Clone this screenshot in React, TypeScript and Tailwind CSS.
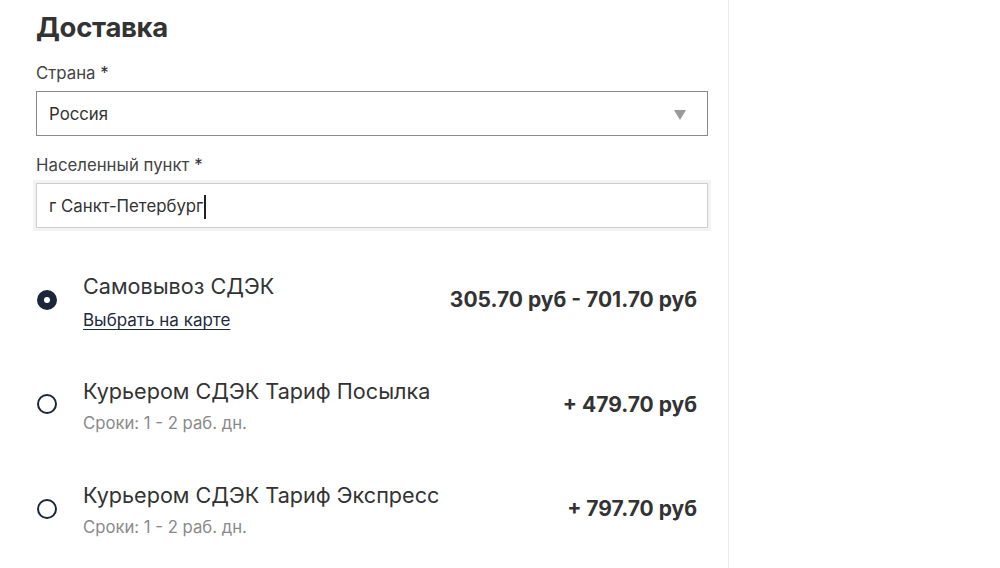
import React, { useState } from "react";

interface Option {
  id: string;
  title: string;
  sub?: string;
  link?: string;
  price: string;
}

const options: Option[] = [
  { id: "pickup", title: "Самовывоз СДЭК", link: "Выбрать на карте", price: "305.70 руб - 701.70 руб" },
  { id: "parcel", title: "Курьером СДЭК Тариф Посылка", sub: "Сроки: 1 - 2 раб. дн.", price: "+ 479.70 руб" },
  { id: "express", title: "Курьером СДЭК Тариф Экспресс", sub: "Сроки: 1 - 2 раб. дн.", price: "+ 797.70 руб" },
];

export default function App() {
  const [selected, setSelected] = useState("pickup");

  return (
    <div className="flex h-[568px] w-[1000px] overflow-hidden bg-white font-['Inter',sans-serif] text-[#333]">
      <div className="w-[729px] shrink-0 border-r border-[#ececec] pl-9 pr-5 shadow-[1px_0_3px_rgba(0,0,0,0.04)]">
        <h2 className="pt-[9px] text-[27.5px] font-bold leading-[36px] tracking-[-0.3px] text-[#333]">Доставка</h2>

        <label className="mt-[18px] block text-[16.8px] leading-5 text-[#444]">
          Страна <span className="text-[#333]">*</span>
        </label>
        <div className="mt-[8px] flex h-[45px] items-center justify-between border border-[#8a8a8a] pl-3 pr-5">
          <span className="pt-[3px] text-[16.8px] text-[#333]">Россия</span>
          <svg width="14" height="12" viewBox="0 0 14 12" className="mt-[2px] text-[#9a9a9a]">
            <path d="M1 1h12L7 11z" fill="currentColor" />
          </svg>
        </div>

        <label className="mt-[19px] block text-[16.8px] leading-5 text-[#444]">
          Населенный пункт <span className="text-[#333]">*</span>
        </label>
        <div className="mt-[8px] flex h-[45px] items-center border border-[#cfcfcf] pl-3 shadow-[0_0_0_3px_#f3f3f3]">
          <span className="pt-[3px] text-[16.8px] text-[#333]">г Санкт-Петербург</span>
          <span className="ml-[1px] mt-[2px] h-[24px] w-[1.5px] bg-[#222]" />
        </div>

        <div className="mt-[33px] flex flex-col">
          {options.map((o) => (
            <button
              key={o.id}
              onClick={() => setSelected(o.id)}
              className="flex h-[104.5px] items-start pr-[11px] text-left"
            >
              <span className="mt-[28.5px] flex w-[47px] shrink-0">
                {selected === o.id ? (
                  <span className="ml-[1px] flex h-[20px] w-[20px] items-center justify-center rounded-full bg-[#1c2639]">
                    <span className="h-[6px] w-[6px] rounded-full bg-white" />
                  </span>
                ) : (
                  <span className="ml-[1px] h-[20px] w-[20px] rounded-full border-2 border-[#1c2639]" />
                )}
              </span>
              <span className="mt-[10px] flex flex-1 flex-col">
                <span className="text-[21.6px] leading-[30px] text-[#333]">{o.title}</span>
                {o.link && (
                  <span className="mt-[9px] text-[17px] leading-5 text-[#1f2a3d] underline underline-offset-[3px]">{o.link}</span>
                )}
                {o.sub && <span className="mt-[7px] text-[16.7px] leading-5 text-[#8a8a8a]">{o.sub}</span>}
              </span>
              <span className="mt-[25px] text-[21px] font-bold leading-[28px] text-[#333]">{o.price}</span>
            </button>
          ))}
        </div>
      </div>
      <div className="flex-1 bg-white" />
    </div>
  );
}
